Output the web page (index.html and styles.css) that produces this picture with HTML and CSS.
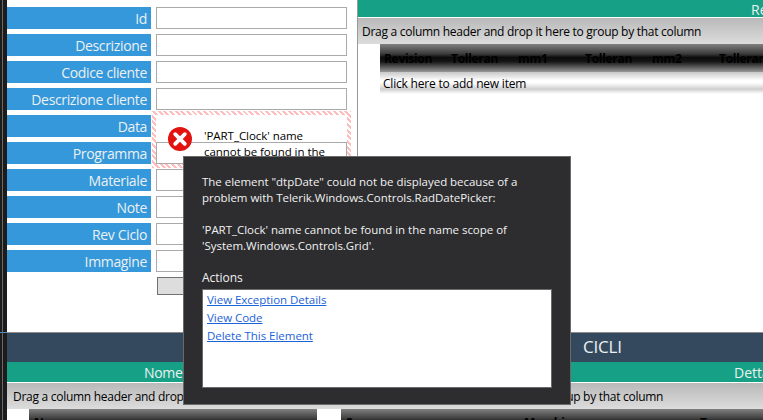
FILE: index.html
```html
<!DOCTYPE html>
<html lang="it">
<head>
<meta charset="utf-8">
<title>Designer</title>
<link rel="stylesheet" href="styles.css">
</head>
<body>
<div class="app">
  <div class="strip"><div class="strip-line"></div></div>
  <div class="main">
    <section class="top">
      <form class="form">
        <div class="row"><label class="lab">Id</label><div class="inp"></div></div>
        <div class="row"><label class="lab">Descrizione</label><div class="inp"></div></div>
        <div class="row"><label class="lab">Codice cliente</label><div class="inp"></div></div>
        <div class="row"><label class="lab">Descrizione cliente</label><div class="inp"></div></div>
        <div class="row"><label class="lab">Data</label><div class="inp inp-empty"></div></div>
        <div class="row"><label class="lab">Programma</label><div class="inp"></div></div>
        <div class="row"><label class="lab">Materiale</label><div class="inp"></div></div>
        <div class="row"><label class="lab">Note</label><div class="inp"></div></div>
        <div class="row"><label class="lab">Rev Ciclo</label><div class="inp"></div></div>
        <div class="row"><label class="lab">Immagine</label><div class="inp"></div></div>
        <div class="btn-row"><div class="btn"></div></div>
        <div class="adorner">
          <svg class="err-icon" width="26" height="26" viewBox="0 0 26 26" aria-hidden="true">
            <circle cx="13" cy="13" r="12" fill="#e3140f"/>
            <path d="M8.2 8.2 L17.8 17.8 M17.8 8.2 L8.2 17.8" stroke="#fff" stroke-width="3.8" stroke-linecap="round"/>
          </svg>
          <p class="err-text">'PART_Clock' name cannot be found in the name scope</p>
        </div>
      </form>
      <div class="pane">
        <div class="green green-top">Re</div>
        <div class="drag">Drag a column header and drop it here to group by that column</div>
        <div class="grid-body">
          <div class="indent"></div>
          <div class="grid-main">
            <div class="head cols">
              <span>Revision</span><span>Tolleran</span><span>mm1</span><span>Tolleran</span><span>mm2</span><span>Tolleran</span>
            </div>
            <div class="add">Click here to add new item</div>
          </div>
        </div>
      </div>
    </section>
    <section class="bottom">
      <div class="title">CICLI</div>
      <div class="lower">
        <div class="col col-left">
          <div class="green green-nome">Nome</div>
          <div class="drag drag-low">Drag a column header and drop it here to group by that column</div>
          <div class="grid-body">
            <div class="indent"></div>
            <div class="grid-main"><div class="head low-head"><span>Nome</span></div></div>
          </div>
        </div>
        <div class="col col-right">
          <div class="green green-det">Dettagli</div>
          <div class="drag drag-low drag-right">Drag a column header and drop it here to group by that column</div>
          <div class="grid-body">
            <div class="indent"></div>
            <div class="grid-main"><div class="head low-head low-cols"><span>Seq</span><span>Macchina</span><span>Tempo</span></div></div>
          </div>
        </div>
      </div>
    </section>
  </div>
</div>
<aside class="dialog">
  <p class="msg">The element "dtpDate" could not be displayed because of a<br>problem with Telerik.Windows.Controls.RadDatePicker:</p>
  <p class="msg msg-2">'PART_Clock' name cannot be found in the name scope of<br>'System.Windows.Controls.Grid'.</p>
  <p class="actions">Actions</p>
  <div class="links">
    <a href="#">View Exception Details</a>
    <a href="#">View Code</a>
    <a href="#">Delete This Element</a>
  </div>
</aside>
</body>
</html>
```

FILE: styles.css
```css
* { box-sizing: border-box; }
html, body { margin: 0; height: 100%; overflow: hidden; background: #fff; }
body { font-family: "Open Sans", "Noto Sans", sans-serif; font-size: 12px; color: #000; position: relative; }
p { margin: 0; }

.app { display: flex; width: 763px; height: 420px; overflow: hidden; }
.strip { width: 7px; flex: none; background: linear-gradient(#1c1c1c 0 332px, #4a90d9 332px 333px, #1c1c1c 333px); display: flex; padding-left: 2px; }
.strip-line { width: 1px; background: #6a6a6a; }
.main { flex: 1; min-width: 0; display: flex; flex-direction: column; }

.top { height: 332px; flex: none; display: flex; }
.form { position: relative; width: 350px; flex: none; padding-top: 7px; display: flex; flex-direction: column; gap: 5px; }
.row { display: flex; height: 22px; gap: 5px; }
.lab { width: 144px; flex: none; background: #3498db; color: #ecf0f1; font-size: 14px; line-height: 24px; text-align: right; padding-right: 4px; letter-spacing: -0.35px; white-space: nowrap; overflow: hidden; }
.inp { width: 191px; flex: none; border: 1px solid #aaa; background: #fff; }
.inp-empty { border: 0; }
.btn-row { padding-left: 150px; }
.btn { width: 120px; height: 18px; background: #dddddd; border: 1px solid #707070; }

.adorner {
  position: absolute; left: 145px; top: 111px; width: 199px; height: 57px;
  border: 4px solid #ffc4c4;
  border-image: repeating-linear-gradient(45deg, #ffbdbd 0 2px, #fff 2px 4px) 4;
  display: flex; align-items: flex-start;
}
.err-icon { flex: none; margin: 11px 0 0 11px; }
.err-text { width: 130px; margin: 13px 0 0 11px; font-size: 11.5px; line-height: 16px; letter-spacing: -0.05px; overflow: hidden; height: 36px; }

.pane { flex: 1; min-width: 0; border-left: 1px solid #999; display: flex; flex-direction: column; }
.green { background: #16a085; color: #ecf0f1; font-size: 14px; line-height: 20px; white-space: nowrap; overflow: hidden; }
.green-top { height: 17px; line-height: 19px; padding-left: 393px; }
.drag { height: 27px; border-top: 1px solid #fff; background: linear-gradient(#b9b9b9, #dcdcdc); font-size: 12px; line-height: 27px; padding-left: 4px; letter-spacing: -0.28px; white-space: nowrap; overflow: hidden; }
.grid-body { display: flex; flex: 1; min-height: 0; }
.indent { width: 22px; flex: none; background: #fff; }
.grid-main { flex: 1; min-width: 0; }
.head { height: 28px; background: linear-gradient(#808080 0, #3c3c3c 35%, #0c0c0c 48%, #141414 62%, #4a4a4a 78%, #999 100%); font-weight: 700; font-size: 12px; line-height: 30px; color: #000; letter-spacing: -0.3px; overflow: hidden; white-space: nowrap; }
.cols { display: grid; grid-template-columns: repeat(6, 67px); padding-left: 4px; }
.add { height: 22px; background: linear-gradient(#c8c8c8 0, #fff 38%, #fff 48%, #cfcfcf 78%, #fff 100%); line-height: 24px; padding-left: 3px; letter-spacing: -0.2px; }

.bottom { flex: 1; min-height: 0; display: flex; flex-direction: column; }
.title { height: 30px; flex: none; border-top: 1px solid #8c8c8c; background: #34495e; color: #ecf0f1; font-size: 17px; line-height: 28px; padding-left: 576px; letter-spacing: -0.2px; }
.lower { flex: 1; min-height: 0; display: flex; }
.col { display: flex; flex-direction: column; min-width: 0; }
.col-left { width: 311px; flex: none; }
.col-right { flex: 1; padding-left: 0; }
.green-nome, .green-det { height: 20px; line-height: 22px; flex: none; }
.green-nome { padding-left: 137px; margin-right: -1px; letter-spacing: -0.3px; }
.green-det { padding-left: 416px; }
.drag-low { flex: none; height: 27px; padding-left: 6px; margin-left: 0; }
.drag-right { padding-left: 6px; }
.low-head { padding-left: 5px; height: 28px; line-height: 28px; }
.col-left .grid-main { flex: none; width: 288px; }
.col-right .indent { margin-left: 1px; }
.low-cols { display: flex; padding-left: 5px; }
.low-cols span:nth-child(1) { width: 178px; }
.low-cols span:nth-child(2) { width: 176px; }

.dialog { position: absolute; left: 183px; top: 156px; width: 388px; height: 249px; background: #2d2d30; border: 1px solid #6a6a6a; color: #f1f1f1; padding: 17px 18px 0; font-size: 11.5px; line-height: 16px; letter-spacing: -0.03px; }
.msg-2 { margin-top: 16px; }
.actions { margin-top: 16px; font-size: 12px; }
.links { margin-top: 3px; width: 350px; height: 99px; background: #fff; border: 1px solid #6a6a6a; padding: 2px 4px; display: flex; flex-direction: column; align-items: flex-start; gap: 2px; }
.links a { color: #1c62d8; font-size: 11.5px; line-height: 16px; }
```
